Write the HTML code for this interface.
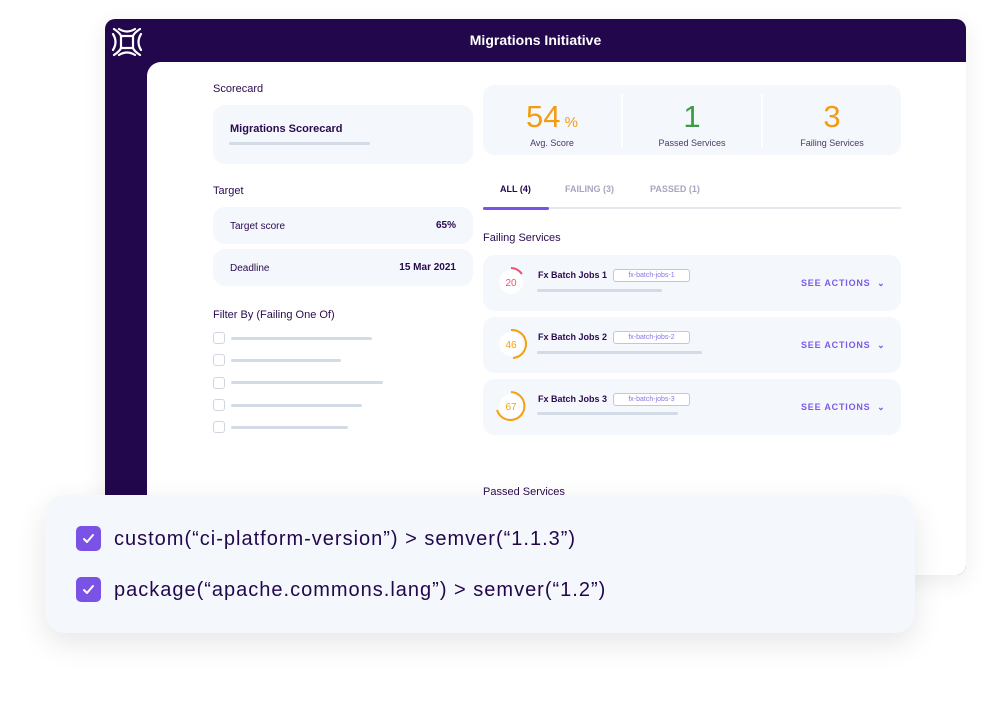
<!DOCTYPE html>
<html><head><meta charset="utf-8"><style>
*{box-sizing:border-box;margin:0;padding:0}
body{width:1003px;height:708px;background:#fff;position:relative;overflow:hidden;font-family:"Liberation Sans",sans-serif;color:#2a0a4f}
.abs{position:absolute}
.main{left:105px;top:19px;width:861px;height:556px;background:#22074d;border-radius:10px;box-shadow:0 6px 24px rgba(0,0,0,.08)}
.white{left:147px;top:62px;width:819px;height:513px;background:#fff;border-radius:14px 0 10px 0}
.lbl{font-size:11px;color:#2a0a4f}
.box{background:#f4f7fc;border-radius:12px}
.bar{background:#d3dbe6;height:3px;border-radius:2px}
.cb{width:12px;height:12px;border:1px solid #cfd6e2;border-radius:3px;background:#fff}
.row{left:483px;width:418px;height:56px}
.see{font-size:9px;color:#7b5be8;font-weight:bold;letter-spacing:.8px}
.tag{border:1px solid #c9bdf7;border-radius:3px;font-size:7px;color:#8b74e8;width:77px;height:13px;text-align:center;line-height:12px;background:#fff}
.float{left:45px;top:495px;width:870px;height:138px;background:#f4f7fc;border-radius:20px;box-shadow:0 10px 30px rgba(0,0,0,.1)}
.chk{width:25px;height:25px;background:#7b52e6;border-radius:5px}
.ft{font-size:20px;color:#22074d;letter-spacing:1px}
</style></head><body>
<div class="abs main"></div>
<svg class="abs" style="left:111px;top:27px" width="32" height="30" viewBox="0 0 32 30" fill="none" stroke="#fff" stroke-width="2.2" stroke-linecap="round">
<rect x="10" y="9" width="12" height="12"/>
<path d="M3 2 Q9 6 10 9 M29 2 Q23 6 22 9 M3 28 Q9 24 10 21 M29 28 Q23 24 22 21"/>
<path d="M8 2 Q16 7 24 2 M8 28 Q16 23 24 28 M2 7 Q7 15 2 23 M30 7 Q25 15 30 23"/>
</svg>
<div class="abs" style="left:105px;top:32px;width:861px;text-align:center;color:#fff;font-weight:bold;font-size:14px">Migrations Initiative</div>
<div class="abs white"></div>

<div class="abs lbl" style="left:213px;top:83px">Scorecard</div>
<div class="abs box" style="left:213px;top:105px;width:260px;height:59px"></div>
<div class="abs" style="left:230px;top:123px;font-size:11px;font-weight:bold">Migrations Scorecard</div>
<div class="abs bar" style="left:229px;top:142px;width:141px"></div>

<div class="abs lbl" style="left:213px;top:185px">Target</div>
<div class="abs box" style="left:213px;top:207px;width:260px;height:37px"></div>
<div class="abs" style="left:230px;top:221px;font-size:10px">Target score</div>
<div class="abs" style="left:380px;top:220px;width:76px;text-align:right;font-size:10px;font-weight:bold">65%</div>
<div class="abs box" style="left:213px;top:249px;width:260px;height:37px"></div>
<div class="abs" style="left:230px;top:263px;font-size:10px">Deadline</div>
<div class="abs" style="left:370px;top:262px;width:86px;text-align:right;font-size:10px;font-weight:bold">15 Mar 2021</div>

<div class="abs lbl" style="left:213px;top:309px">Filter By (Failing One Of)</div>
<div class="abs cb" style="left:213px;top:332px"></div><div class="abs bar" style="left:231px;top:337px;width:141px"></div>
<div class="abs cb" style="left:213px;top:354px"></div><div class="abs bar" style="left:231px;top:359px;width:110px"></div>
<div class="abs cb" style="left:213px;top:377px"></div><div class="abs bar" style="left:231px;top:381px;width:152px"></div>
<div class="abs cb" style="left:213px;top:399px"></div><div class="abs bar" style="left:231px;top:404px;width:131px"></div>
<div class="abs cb" style="left:213px;top:421px"></div><div class="abs bar" style="left:231px;top:426px;width:117px"></div>

<div class="abs box" style="left:483px;top:85px;width:418px;height:70px"></div>
<div class="abs" style="left:621px;top:94px;width:2px;height:53px;background:#fff"></div>
<div class="abs" style="left:761px;top:94px;width:2px;height:53px;background:#fff"></div>
<div class="abs" style="left:483px;top:100px;width:138px;text-align:center;color:#f39c12;font-size:31px;line-height:34px">54<span style="font-size:15px"> %</span></div>
<div class="abs" style="left:483px;top:138px;width:138px;text-align:center;font-size:9px;color:#4a3a6a">Avg. Score</div>
<div class="abs" style="left:623px;top:100px;width:138px;text-align:center;color:#3d9b46;font-size:31px;line-height:34px">1</div>
<div class="abs" style="left:623px;top:138px;width:138px;text-align:center;font-size:9px;color:#4a3a6a">Passed Services</div>
<div class="abs" style="left:763px;top:100px;width:138px;text-align:center;color:#f39c12;font-size:31px;line-height:34px">3</div>
<div class="abs" style="left:763px;top:138px;width:138px;text-align:center;font-size:9px;color:#4a3a6a">Failing Services</div>

<div class="abs" style="left:500px;top:184px;font-size:9px;font-weight:bold;color:#22074d">ALL (4)</div>
<div class="abs" style="left:565px;top:184px;font-size:9px;font-weight:bold;color:#aaa4bd">FAILING (3)</div>
<div class="abs" style="left:650px;top:184px;font-size:9px;font-weight:bold;color:#aaa4bd">PASSED (1)</div>
<div class="abs" style="left:483px;top:207px;width:418px;height:2px;background:#e6e8ee"></div>
<div class="abs" style="left:483px;top:207px;width:66px;height:3px;background:#7b52e6;border-radius:2px"></div>

<div class="abs lbl" style="left:483px;top:232px">Failing Services</div>

<div class="abs row box" style="top:255px"></div>
<div class="abs row box" style="top:317px"></div>
<div class="abs row box" style="top:379px"></div>

<svg class="abs" style="left:495px;top:264px" width="34" height="34"><circle cx="16" cy="18" r="12" fill="#fff"/><path d="M16 4 A14 14 0 0 1 27 10" stroke="#f0506e" stroke-width="2" fill="none"/><text x="16" y="22" text-anchor="middle" font-size="10" fill="#f0506e" font-family="Liberation Sans">20</text></svg>
<svg class="abs" style="left:495px;top:326px" width="34" height="34"><circle cx="16" cy="18" r="12" fill="#fff"/><path d="M16 4 A14 14 0 0 1 18 32" stroke="#f5a00e" stroke-width="2" fill="none"/><text x="16" y="22" text-anchor="middle" font-size="10" fill="#f5a00e" font-family="Liberation Sans">46</text></svg>
<svg class="abs" style="left:495px;top:388px" width="34" height="34"><circle cx="16" cy="18" r="12" fill="#fff"/><path d="M16 4 A14 14 0 1 1 2 22" stroke="#f5a00e" stroke-width="2" fill="none"/><text x="16" y="22" text-anchor="middle" font-size="10" fill="#f5a00e" font-family="Liberation Sans">67</text></svg>

<div class="abs" style="left:538px;top:270px;font-size:9px;font-weight:bold">Fx Batch Jobs 1</div>
<div class="abs tag" style="left:613px;top:269px">fx-batch-jobs-1</div>
<div class="abs bar" style="left:537px;top:289px;width:125px"></div>
<div class="abs see" style="left:801px;top:278px">SEE ACTIONS &nbsp;⌄</div>

<div class="abs" style="left:538px;top:332px;font-size:9px;font-weight:bold">Fx Batch Jobs 2</div>
<div class="abs tag" style="left:613px;top:331px">fx-batch-jobs-2</div>
<div class="abs bar" style="left:537px;top:351px;width:165px"></div>
<div class="abs see" style="left:801px;top:340px">SEE ACTIONS &nbsp;⌄</div>

<div class="abs" style="left:538px;top:394px;font-size:9px;font-weight:bold">Fx Batch Jobs 3</div>
<div class="abs tag" style="left:613px;top:393px">fx-batch-jobs-3</div>
<div class="abs bar" style="left:537px;top:412px;width:141px"></div>
<div class="abs see" style="left:801px;top:402px">SEE ACTIONS &nbsp;⌄</div>

<div class="abs lbl" style="left:483px;top:486px">Passed Services</div>

<div class="abs float"></div>
<div class="abs chk" style="left:76px;top:526px"></div>
<svg class="abs" style="left:76px;top:526px" width="25" height="25"><path d="M8 13 L11 16 L17 9" stroke="#fff" stroke-width="2" fill="none" stroke-linecap="round" stroke-linejoin="round"/></svg>
<div class="abs ft" style="left:114px;top:528px">custom(“ci-platform-version”) &gt; semver(“1.1.3”)</div>
<div class="abs chk" style="left:76px;top:577px"></div>
<svg class="abs" style="left:76px;top:577px" width="25" height="25"><path d="M8 13 L11 16 L17 9" stroke="#fff" stroke-width="2" fill="none" stroke-linecap="round" stroke-linejoin="round"/></svg>
<div class="abs ft" style="left:114px;top:579px">package(“apache.commons.lang”) &gt; semver(“1.2”)</div>
</body></html>
